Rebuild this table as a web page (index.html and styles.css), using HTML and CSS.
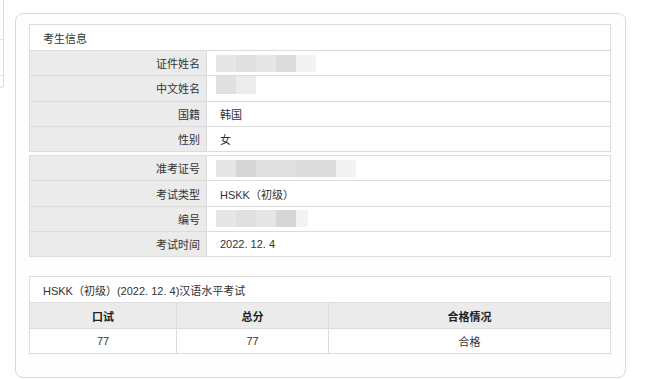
FILE: index.html
```html
<!DOCTYPE html>
<html lang="zh-CN">
<head>
    <meta charset="UTF-8">
    <meta name="viewport" content="width=device-width, initial-scale=1.0">
    <title>成绩查询</title>
    <link rel="stylesheet" href="styles.css">
</head>
<body>
    <!-- left menu, mostly scrolled out of view -->
    <div class="side">
        <div class="side-item side-item-tall"></div>
        <div class="side-item"></div>
    </div>

    <div class="card">
        <table class="info">
            <colgroup><col class="col-label"><col></colgroup>
            <tr class="caption-row"><td colspan="2">考生信息</td></tr>
            <tr>
                <th>证件姓名</th>
                <td><div class="mask"><span class="m2"></span><span class="m3"></span><span class="m2"></span><span class="m4"></span><span class="m1"></span></div></td>
            </tr>
            <tr>
                <th>中文姓名</th>
                <td><div class="mask mask-low"><span class="m3"></span><span class="m1b"></span></div></td>
            </tr>
            <tr><th>国籍</th><td>韩国</td></tr>
            <tr><th>性别</th><td>女</td></tr>
        </table>

        <table class="info info-next">
            <colgroup><col class="col-label"><col></colgroup>
            <tr>
                <th>准考证号</th>
                <td><div class="mask"><span class="m2"></span><span class="m5"></span><span class="m3"></span><span class="m3"></span><span class="m4"></span><span class="m4"></span><span class="m1"></span></div></td>
            </tr>
            <tr><th>考试类型</th><td>HSKK（初级）</td></tr>
            <tr>
                <th>编号</th>
                <td><div class="mask"><span class="m2"></span><span class="m3"></span><span class="m2"></span><span class="m5"></span><span class="m1 m-half"></span></div></td>
            </tr>
            <tr><th>考试时间</th><td>2022. 12. 4</td></tr>
        </table>

        <table class="score">
            <colgroup>
                <col class="col-a">
                <col class="col-b">
                <col>
            </colgroup>
            <tr class="caption-row"><td colspan="3">HSKK（初级）(2022. 12. 4)汉语水平考试</td></tr>
            <tr><th>口试</th><th>总分</th><th>合格情况</th></tr>
            <tr><td>77</td><td>77</td><td>合格</td></tr>
        </table>
    </div>
</body>
</html>
```

FILE: styles.css
```css
* {margin: 0; padding: 0; box-sizing: border-box;}
body {background-color: #FFFFFF; color: #333333; font-family: 'Liberation Sans', 'Noto Sans CJK SC', sans-serif; font-size: 11px; display: flex; align-items: flex-start; overflow: hidden; height: 379px;}

.side {width: 4px; height: 88px; border-right: 1px solid #dcdcdc; border-bottom: 1px solid #dcdcdc; border-bottom-right-radius: 5px; flex-shrink: 0;}
.side .side-item {height: 36px; border-bottom: 1px solid #e2e2e2;}
.side .side-item-tall {height: 40px;}

.card {margin: 13px 0 0 11px; width: 611px; height: 365px; border: 1px solid #d9d9d9; border-radius: 8px; background-color: #FEFEFE; padding: 10px 13px 0 13px; flex-shrink: 0;}

table {width: 582px; border-collapse: collapse; table-layout: fixed;}
th, td {border: 1px solid #dcdcdc; height: 25.3px; font-weight: normal; white-space: nowrap; vertical-align: middle;}

.caption-row td {background-color: #FFFFFF; text-align: left; padding-left: 13px; height: 26px;}

.info .col-label {width: 177px;}
.info th {background-color: #EBEBEB; text-align: right; padding-right: 6px;}
.info td {background-color: #FFFFFF; padding-left: 13px;}
.info-next {margin-top: 3px;}

/* mosaic over personal data */
.mask {display: flex; height: 17px; margin-left: -4px;}
.mask span {display: block; width: 20px; height: 100%;}
.mask .m1 {background-color: #F3F3F3;}
.mask .m1b {background-color: #ECECEC;}
.mask .m2 {background-color: #E6E6E6;}
.mask .m3 {background-color: #E0E0E0;}
.mask .m4 {background-color: #DCDCDC;}
.mask .m5 {background-color: #D6D6D6;}
.mask .m-half {width: 12px;}
.mask-low {margin-top: -7px; height: 18px;}

.score {margin-top: 19px;}
.score .col-a {width: 147px;}
.score .col-b {width: 152px;}
.score th {background-color: #EBEBEB; text-align: center; color: #222222; font-weight: 600;}
.score td {text-align: center; background-color: #FFFFFF;}
.score .caption-row td {padding-left: 13px; text-align: left;}
```
